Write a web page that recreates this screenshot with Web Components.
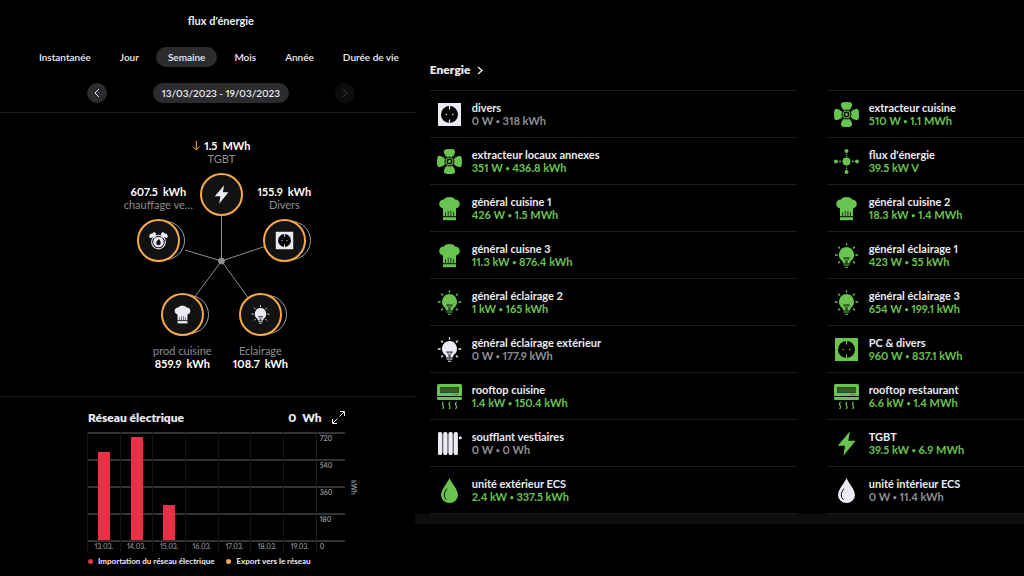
<!DOCTYPE html>
<html lang="fr">
<head>
<meta charset="utf-8">
<meta name="viewport" content="width=device-width, initial-scale=1">
<title>flux d'énergie</title>
<style>
  html, body { margin: 0; height: 100%; background: #000; }
  body { font-family: Lato, "Open Sans", sans-serif; font-size: 11px; color: #ebebf5; font-variant-numeric: proportional-nums; }
</style>
</head>
<body>
<energy-app></energy-app>

<script>
const BASE = `<style>
  *, *::before, *::after { box-sizing: border-box; }
  :host { box-sizing: border-box; }
  h1, h2, p, ul, figure { margin: 0; padding: 0; }
  button { font: inherit; font-variant-numeric: inherit; color: inherit; background: none; border: 0; padding: 0; cursor: pointer; }
  a { color: inherit; text-decoration: none; }
</style>`;

class BaseElement extends HTMLElement {
  connectedCallback() {
    if (this.shadowRoot) return;
    this.attachShadow({ mode: 'open' }).innerHTML = BASE + this.render();
  }
}

const ICONS = {
  fan: `<g fill="currentColor">${[0, 90, 180, 270].map(a =>
      `<path transform="rotate(${a} 12.5 12.5)" d="M8.6.3Q12.5-.2 16.4.3Q18.4 1 18.1 3.2Q17.6 6.2 15 8.2Q12.5 6.8 10 8.2Q7.4 6.2 6.9 3.2Q6.6 1 8.6.3Z"/>`).join('')}
      <circle cx="12.5" cy="12.5" r="1.4"/></g>
      <circle cx="12.5" cy="12.5" r="3.5" fill="none" stroke="currentColor" stroke-width="1.1"/>`,
  chef: `<path fill="currentColor" d="M6 20.2V12.4C3.6 12 2.2 10.2 2.2 8C2.200 5.200 4.400 3.200 7 3.400C8 1.700 10 1 12.500 1S17 1.700 18 3.400C20.600 3.200 22.800 5.200 22.800 8C22.800 10.200 21.400 12 19 12.400V20.200Z"/>
      <path fill="currentColor" d="M6 21.200H19V24.200H6Z"/>
      <path stroke="#000" stroke-width=".7" d="M8.500 16.300V20.200M11.200 14.800V20.200M13.900 14.800V20.200M16.500 16.300V20.200"/>`,
  bulb: `<path fill="currentColor" d="M12.500 4A7.700 7.700 0 0 1 16.700 18L15.600 20.500H9.400L8.300 18A7.700 7.700 0 0 1 12.500 4Z"/>
      <path stroke="currentColor" stroke-width="1.100" d="M9.500 22H15.500M11 24.200H14"/>
      <path stroke="currentColor" stroke-width="1.300" d="M12.500.3V2.600M.900 12H3.600M21.400 12H24.100M4.200 3.700L6 5.500M20.800 3.700L19 5.500M4.200 20.300L6 18.500M20.800 20.300L19 18.500"/>
      <path fill="none" stroke="#000" stroke-width=".8" d="M9.300 15H15.700M11 15V16.500L12 17.500V20.500M14 15V16.500L13 17.500V20.500"/>`,
  socket: `<path fill="currentColor" d="M1 1H24V24H1Z"/><circle cx="12.500" cy="12.500" r="8.500" fill="#000"/>
      <path stroke="currentColor" stroke-width="1.200" d="M12.500 3.500V7.500M12.500 17.500V21.500"/>
      <circle cx="9.300" cy="12.500" r=".8" fill="currentColor"/><circle cx="15.700" cy="12.500" r=".8" fill="currentColor"/>`,
  ac: `<path fill="currentColor" d="M1.500 0H23.500Q25 0 25 1.500V12H0V1.500Q0 0 1.500 0ZM0 13H25V14.500Q25 16 23.500 16H1.500Q0 16 0 14.500Z"/>
      <path fill="#000" opacity=".6" d="M3 3H22V9H3Z"/><path stroke="currentColor" opacity=".5" stroke-width=".5" d="M3.500 5H21.500M3.500 7H21.500"/>
      <path stroke="#000" opacity=".6" d="M17 10.500H18M19.500 10.500H20.500"/>
      <path fill="none" stroke="currentColor" stroke-width="1.200" d="M6.500 18Q4.800 19.800 6 21.500T5.500 25M13 18Q11.300 19.800 12.500 21.500T12 25M19.500 18Q17.800 19.800 19 21.500T18.500 25"/>`,
  radiator: `<g fill="currentColor"><rect x="1" y="1" width="4" height="23" rx="1.500"/><rect x="6.300" y="1" width="4" height="23" rx="1.500"/><rect x="11.600" y="1" width="4" height="23" rx="1.500"/><rect x="16.900" y="1" width="4" height="23" rx="1.500"/>
      <path opacity=".4" d="M4 3H18V22H4Z"/><circle cx="23.300" cy="6.700" r="1.500"/></g>`,
  drop: `<path fill="currentColor" d="M12.500 0C14.500 5 21 11.500 21 17A8.500 8 0 0 1 4 17C4 11.500 10.500 5 12.500 0Z"/>
      <path fill="none" stroke="#000" stroke-width="1" stroke-linecap="round" d="M9.600 11C6.600 15 6.400 19 9.300 21.500"/>`,
  bolt: `<path fill="currentColor" d="M16 .3L3.700 14.800H11L9.400 24.700L21.700 9.700H14.300Z"/>`,
  flow: `<g fill="currentColor"><circle cx="12.500" cy="12.500" r="4"/><circle cx="12.500" cy="2" r="2"/><circle cx="12.500" cy="23" r="2"/><circle cx="2" cy="12.500" r="2"/><circle cx="23" cy="12.500" r="2"/>
      <circle cx="12.500" cy="5.500" r=".7"/><circle cx="12.500" cy="7.500" r=".6"/><circle cx="12.500" cy="19.500" r=".7"/><circle cx="12.500" cy="17.500" r=".6"/><circle cx="6" cy="12.500" r=".9"/><circle cx="19" cy="12.500" r=".9"/></g>`,
  heater: `<g fill="currentColor"><path d="M0 7.500L1.500 4L5 3L6.500 1L9.500 3.500L8.500 6L9.500 7.500L6.500 9.500L5 8L2 9.500ZM25 7.500L23.500 4L20 3L18.500 1L15.500 3.500L16.500 6L15.500 7.500L18.500 9.500L20 8L23 9.500Z"/></g>
      <circle cx="12.500" cy="14.500" r="9" fill="none" stroke="currentColor" stroke-width="1.400"/><circle cx="12.500" cy="14.500" r="7" fill="currentColor"/>
      <path fill="#111" d="M13 10C13.500 12 15.500 13.500 15.500 15.800A3 3 0 0 1 9.500 15.800C9.500 14 10.500 13.500 10.800 12.500C12 12.500 12.500 11.500 13 10Z"/>`
};

customElements.define('app-icon', class extends BaseElement {
  render() {
    return `<style>:host { display: block; flex: none; width: 25px; height: 25px; } svg { display: block; width: 100%; height: 100%; }</style>
      <svg viewBox="0 0 25 25" aria-hidden="true">${ICONS[this.getAttribute('name')]}</svg>`;
  }
});

customElements.define('period-picker', class extends BaseElement {
  render() {
    const tabs = ['Instantanée', 'Jour', 'Semaine', 'Mois', 'Année', 'Durée de vie'];
    return `<style>
      :host { display: block; border-bottom: 1px solid #1c1c1e; padding-bottom: 9px; }
      h1 { font-size: 11px; line-height: 16px; font-weight: 700; text-align: center; padding: 13px 0 18px 27px; }
      nav { display: flex; justify-content: center; gap: 5px; padding-left: 23px; font-size: 10px; font-weight: 600; line-height: 20px; white-space: nowrap; }
      nav button { padding: 0 12px; border-radius: 10px; line-height: 20px; }
      nav button[aria-pressed="true"], .date { background: #2c2c2e; }
      .range { display: flex; justify-content: space-between; align-items: center; margin: 16px 60px 0 87px; }
      .date { font-size: 10px; font-weight: 600; line-height: 20px; padding: 0 9px; border-radius: 10px; }
      .step { width: 20px; height: 20px; border-radius: 50%; background: #2c2c2e; display: grid; place-items: center; }
      .step:disabled { background: #0d0d0e; color: #3a3a3c; }
      .step svg { width: 6px; height: 10px; fill: none; stroke: currentColor; }
    </style>
    <h1>flux d'énergie</h1>
    <nav>${tabs.map(t => `<button type="button" aria-pressed="${t === 'Semaine'}">${t}</button>`).join('')}</nav>
    <div class="range">
      <button type="button" class="step" aria-label="Semaine précédente"><svg viewBox="0 0 6 10"><path d="M5 1L1 5L5 9"/></svg></button>
      <button type="button" class="date">13/03/2023 - 19/03/2023</button>
      <button type="button" class="step" disabled aria-label="Semaine suivante"><svg viewBox="0 0 6 10"><path d="M1 1L5 5L1 9"/></svg></button>
    </div>`;
  }
});

customElements.define('flow-node', class extends BaseElement {
  render() {
    const ghost = this.hasAttribute('ghost') ? '<span class="ghost"></span>' : '';
    return `<style>
      :host { display: block; width: 43px; height: 43px; }
      .ghost, .disc { position: absolute; border-radius: 50%; background: #000; }
      .ghost { inset: 2px -5px 2px 9px; border: 1px solid #a0a0a5; }
      .disc { inset: 0; border: 2px solid #f5a94a; background: #121212; display: grid; place-items: center; }
      app-icon { width: 19px; height: 19px; }
      .label { position: absolute; left: 50%; transform: translateX(-50%); bottom: calc(100% + 8px); display: flex; flex-direction: column; align-items: center; font-size: 11px; line-height: 13px; white-space: nowrap; }
      :host([below]) .label { flex-direction: column-reverse; bottom: auto; top: calc(100% + 8px); }
      .value { display: flex; align-items: center; gap: 5px; font-weight: 700; color: #fff; }
      .name { color: #8e8e93; }
      svg { width: 9px; height: 10px; fill: none; stroke: #f5a94a; margin-right: -2px; }
    </style>
    ${ghost}<span class="disc"><app-icon name="${this.getAttribute('icon')}"></app-icon></span>
    <span class="label"><span class="value">${this.hasAttribute('incoming') ? '<svg viewBox="0 0 9 10"><path d="M4.500 0V9M1 5.500L4.500 9L8 5.500"/></svg>' : ''}<slot name="value"></slot><slot name="unit"></slot></span><span class="name"><slot></slot></span></span>`;
  }
});

customElements.define('flow-diagram', class extends BaseElement {
  render() {
    const nodes = [
      [135, 81, 'bolt', 'TGBT', '1.5', 'MWh', 'incoming'],
      [198, 127, 'socket', 'Divers', '155.9', 'kWh', 'ghost'],
      [174, 201, 'bulb', 'Eclairage', '108.7', 'kWh', 'ghost below'],
      [96, 201, 'chef', 'prod cuisine', '859.9', 'kWh', 'ghost below'],
      [72, 127, 'heater', 'chauffage ve…', '607.5', 'kWh', 'ghost']
    ];
    return `<style>
      :host { display: block; padding-left: 27px; border-bottom: 1px solid #1c1c1e; }
      .canvas { position: relative; width: 270px; height: 283px; margin: 0 auto; }
      svg { display: block; width: 100%; height: 100%; stroke: #8e8e93; fill: #8e8e93; }
      flow-node { position: absolute; left: calc(var(--x) - 21px); top: calc(var(--y) - 21px); }
    </style>
    <div class="canvas">
      <svg viewBox="0 0 270 283" aria-hidden="true"><path d="M135.500 148V81M135.500 148L198 127M135.500 148L174 201M135.500 148L96 201M135.500 148L99 137"/><circle cx="135.500" cy="148" r="3"/></svg>
      ${nodes.map(([x, y, icon, name, value, unit, flags]) => `<flow-node ${flags} icon="${icon}" style="--x:${x}px;--y:${y}px"><span slot="value">${value}</span><span slot="unit">${unit}</span>${name}</flow-node>`).join('')}
    </div>`;
  }
});

customElements.define('grid-chart', class extends BaseElement {
  render() {
    const days = [['13.03.', 81.5], ['14.03.', 95.4], ['15.03.', 32.4], ['16.03.', 0], ['17.03.', 0], ['18.03.', 0], ['19.03.', 0]];
    return `<style>
      :host { display: block; padding: 12px 57px 0 87px; }
      header { display: flex; align-items: center; height: 17px; margin: 0 13px 0 1px; font-size: 12px; font-weight: 800; }
      h2 { font-size: 12px; font-weight: 800; flex: 1; }
      .total { display: flex; gap: 6px; }
      header button { margin-left: 10px; width: 13px; height: 13px; }
      header svg { display: block; width: 13px; height: 13px; fill: none; stroke: currentColor; }
      .body { display: grid; grid-template-columns: 1fr 28px 13px; margin-top: 6px; }
      .plot { grid-column: 1 / 3; grid-row: 1; height: 110px; display: flex; flex-direction: column; justify-content: space-between; }
      .plot i { height: 2px; background: #333336; }
      .days { grid-column: 1; grid-row: 1 / 3; display: grid; grid-template-columns: repeat(7, 1fr); list-style: none; z-index: 1; border-right: 1px solid #1c1c1e; }
      .days li { display: flex; flex-direction: column; align-items: center; border-left: 1px solid #161618; height: 120px; }
      .days div { height: 108px; display: flex; align-items: flex-end; }
      .days b { width: 12px; background: #e83145; }
      .days span, .scale { font-size: 7px; font-weight: 600; color: #8e8e93; line-height: 11px; }
      .days span { padding-top: 1px; }
      .scale { grid-column: 2; grid-row: 1 / 3; display: flex; flex-direction: column; justify-content: space-between; padding: 1px 0 0 3px; font-weight: 700; }
      .unit { grid-column: 3; grid-row: 1; writing-mode: vertical-rl; font-size: 7px; font-weight: 700; color: #8e8e93; place-self: center end; line-height: 8px; }
      .legend { display: flex; gap: 12px; list-style: none; font-size: 8px; line-height: 12px; font-weight: 700; margin: 3px 0 0 1px; white-space: nowrap; }
      .legend li { display: flex; align-items: center; gap: 5px; }
      .legend li::before { content: ""; width: 5px; height: 5px; border-radius: 50%; background: var(--c); }
    </style>
    <header><h2>Réseau électrique</h2><span class="total"><span>0</span><span>Wh</span></span>
      <button type="button" aria-label="Agrandir"><svg viewBox="0 0 13 13"><path d="M7.500 5.500L12 1M8 .500H12.500V5M5.500 7.500L1 12M.500 8V12.500H5"/></svg></button></header>
    <div class="body">
      <div class="plot"><i></i><i></i><i></i><i></i><i></i></div>
      <ul class="days">${days.map(([d, h]) => `<li><div><b style="height:${h}%"></b></div><span>${d}</span></li>`).join('')}</ul>
      <div class="scale"><span>720</span><span>540</span><span>360</span><span>180</span><span>0</span></div>
      <span class="unit">kWh</span>
    </div>
    <ul class="legend"><li style="--c:#e83145">Importation du réseau électrique</li><li style="--c:#f5a94a">Export vers le réseau</li></ul>`;
  }
});

customElements.define('energy-item', class extends BaseElement {
  render() {
    return `<style>
      :host { display: block; height: 47px; border-bottom: 1px solid #1c1c1e; color: #ebebf5; --reading: #8e8e93; }
      :host([active]) { --accent: #69c350; --reading: #69c350; }
      a { display: flex; align-items: center; gap: 10px; height: 100%; padding-left: 7px; }
      app-icon { color: var(--accent, #ebebf5); }
      .text { display: flex; flex-direction: column; font-size: 11px; line-height: 13px; font-weight: 700; white-space: nowrap; }
      .reading { color: var(--reading); }
      ::slotted(span) { white-space: pre; }
    </style>
    <a href="#"><app-icon name="${this.getAttribute('icon')}"></app-icon><span class="text"><slot></slot><span class="reading"><slot name="reading"></slot></span></span></a>`;
  }
});

customElements.define('energy-list', class extends BaseElement {
  render() {
    const columns = [[
      ['socket', 'divers', '0 W • 318 kWh', ''],
      ['fan', 'extracteur locaux annexes', '351 W • 436.8 kWh', 'active'],
      ['chef', 'général cuisine 1', '426 W • 1.5 MWh', 'active'],
      ['chef', 'général cuisne 3', '11.3 kW • 876.4 kWh', 'active'],
      ['bulb', 'général éclairage 2', '1 kW • 165 kWh', 'active'],
      ['bulb', 'général éclairage extérieur', '0 W • 177.9 kWh', ''],
      ['ac', 'rooftop cuisine', '1.4 kW • 150.4 kWh', 'active'],
      ['radiator', 'soufflant vestiaires', '0 W • 0 Wh', ''],
      ['drop', 'unité extérieur ECS', '2.4 kW • 337.5 kWh', 'active']
    ], [
      ['fan', 'extracteur cuisine', '510 W • 1.1 MWh', 'active'],
      ['flow', "flux d'énergie", '39.5 kW V', 'active'],
      ['chef', 'général cuisine 2', '18.3 kW • 1.4 MWh', 'active'],
      ['bulb', 'général éclairage 1', '423 W • 55 kWh', 'active'],
      ['bulb', 'général éclairage 3', '654 W • 199.1 kWh', 'active'],
      ['socket', 'PC & divers', '960 W • 837.1 kWh', 'active'],
      ['ac', 'rooftop restaurant', '6.6 kW • 1.4 MWh', 'active'],
      ['bolt', 'TGBT', '39.5 kW • 6.9 MWh', 'active'],
      ['drop', 'unité intérieur ECS', '0 W • 11.4 kWh', '']
    ]];
    return `<style>
      :host { display: block; padding-top: 62px; overflow: hidden; }
      h2 { font-size: 12px; line-height: 16px; font-weight: 800; padding-left: 15px; }
      h2 a { display: inline-flex; align-items: center; gap: 7px; }
      svg { width: 6px; height: 9px; fill: none; stroke: currentColor; stroke-width: 1.500; }
      .columns { display: flex; gap: 30px; padding: 12px 0 0 15px; }
      .columns > div { flex: 0 0 367px; border-top: 1px solid #1c1c1e; }
      .dot { font-size: 7px; vertical-align: 1px; line-height: 1; }
      .track { height: 10px; background: #0d0f0f; }
    </style>
    <h2><a href="#">Energie <svg viewBox="0 0 6 9" aria-hidden="true"><path d="M1 1L5 4.500L1 8"/></svg></a></h2>
    <div class="columns">${columns.map(items => `<div>${items.map(([icon, name, reading, state]) =>
      `<energy-item icon="${icon}" ${state}>${name.replace('&', '&amp;')}<span slot="reading">${reading.replace('•', '<span class="dot">•</span>')}</span></energy-item>`).join('')}</div>`).join('')}</div>
    <div class="track"></div>`;
  }
});

customElements.define('energy-app', class extends BaseElement {
  render() {
    return `<style>
      :host { display: flex; min-height: 100%; overflow: hidden; }
      aside { flex: 0 0 40.5%; min-width: 0; }
      main { flex: 1; min-width: 0; }
    </style>
    <aside><period-picker></period-picker><flow-diagram></flow-diagram><grid-chart></grid-chart></aside>
    <main><energy-list></energy-list></main>`;
  }
});
</script>
</body>
</html>
